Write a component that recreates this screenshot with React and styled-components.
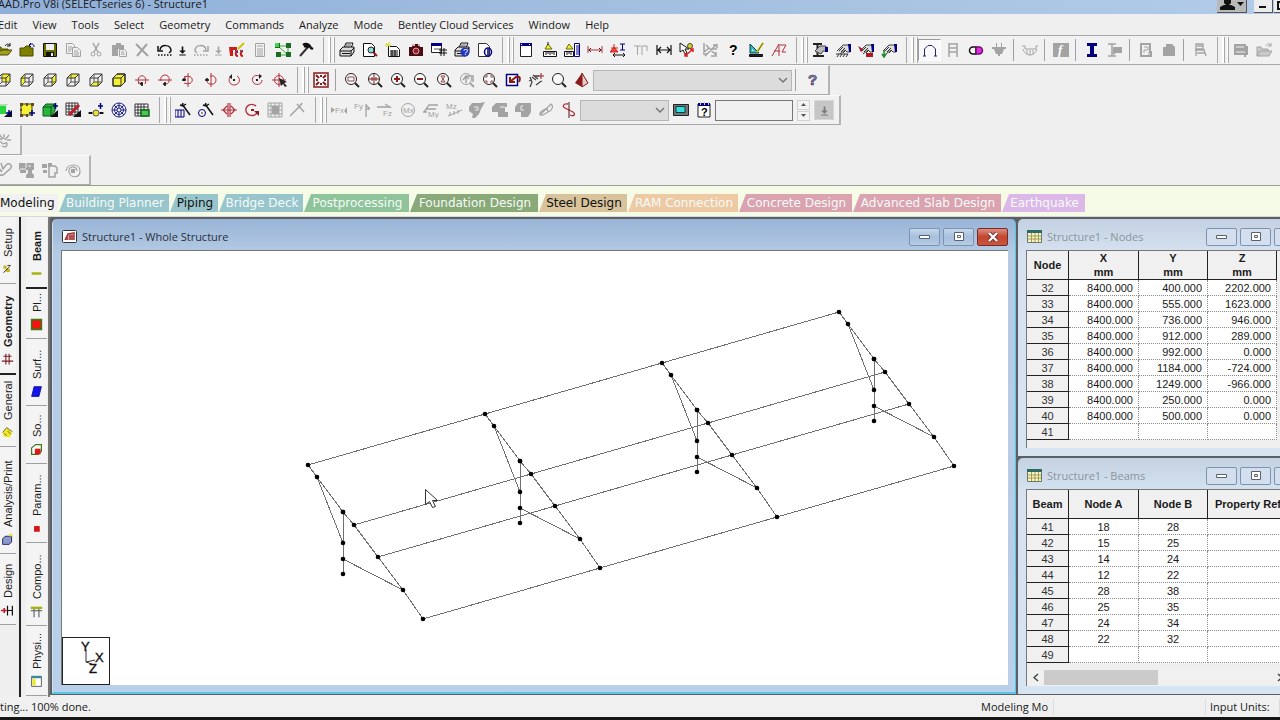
import React from 'react'
import styled, { createGlobalStyle, css } from 'styled-components';

const GlobalStyle = createGlobalStyle`
    * { box-sizing: border-box; }
    body {
        margin: 0;
        background: #efefef;
        font-family: 'Open Sans', 'Noto Sans', sans-serif;
        font-size: 12px;
        color: #1a1a1a;
    }
    button, input, select { font: inherit; color: inherit; }
`;

/* ---------- icons, all on a 16x16 grid ---------- */

const GREY = '#a3a3a3';
const RED = '#b5303a';
const NAVY = '#000080';

const P = ({ d, c = '#111', w = 1, f = 'none' }) => (
    <path d={d} stroke={c} strokeWidth={w} fill={f} />
)

const Cube = ({ face, solid }) => (
    <>
        {solid && <P d="M2 6l4-4h8v8l-4 4H2z" f="#f4f032" />}
        {face && <path d={face} fill="#f4f032" />}
        <P d="M2 6h8v8H2zM2 6l4-4h8v8l-4 4M10 6l4-4" c="#333" />
        {!solid && <P d="M6 2v8h8M6 10l-4 4" c="#555" />}
    </>
)

const Lens = ({ c = '#222', children }) => (
    <>
        <circle cx="7" cy="7" r="5.5" fill={c === GREY ? 'none' : '#fafafa'} stroke={c} />
        <P d="M11 11l4 4" c={c} w={2} />
        {children}
    </>
)

const Printer = () => (
    <>
        <P d="M5 6l2-5h7l-2 5" f="#fff" />
        <P d="M1 8l3-3h11v5l-3 4H1z" f="#ddd" />
        <P d="M1 9h11l3-3M3 11.500h8M12 9v5" />
        <P d="M7 3h5M6 5h5" c="#555" />
    </>
)

const Axle = ({ vertical, flip }) => (
    <g transform={vertical ? 'rotate(90 8 8)' : undefined}>
        <P d="M1 8h14" c={RED} />
        <P d={flip ? 'M4 9C2 1 14 1 12 9c0 2-2 3-3 3' : 'M5 12C1 1 15 1 11 12M4 11h4'} c={RED} />
        <P d="M8 10v4M6 12h3" w={1.500} />
    </g>
)

const Hand = () => (
    <>
        <P d="M2 9l6-6h5l2 1v6h-3l-2-2-5 4" c="#444" f="#ddd" />
        <P d="M4 9l4-4M6 10l4-4M8 11l3-3" c="#333" />
        <path d="M13 2h3v8h-2z" fill={NAVY} />
    </>
)

const Wand = () => <P d="M7 2l8 11M8 1l-1 3M11 2l-3 2M5 3l3 1" w={1.500} />

const Label = ({ x, y, size = 8, c = GREY, children }) => (
    <text x={x} y={y} fontSize={size} fill={c} fontFamily="Liberation Sans, sans-serif">{children}</text>
)

const icons = {
    open: <><P d="M1 13V5h4l1 2h6v2" c="#5b5b00" f="#808000" /><P d="M1 13l4-5h11l-4 5z" c="#4a4a00" f="#a0a020" /><P d="M9 4c2-3 4-2 5 0M14 1v3h-3" /></>,
    folder: <><P d="M1 14V6h4l2-2h4v2h3v8z" c="#4a4a00" f="#808000" /><P d="M11 3c2-2 4-1 4 2M12 1l-2 2 2 2" c={NAVY} /></>,
    save: <><P d="M1.500 1.500h13v13h-13z" f="#6b6b00" /><path d="M4 2h8v6H4z" fill="#eee" /><path d="M4 10h8v4H4z" fill="#111" /><path d="M9 11h2v3H9z" fill="#eee" /></>,
    copy: <><P d="M1.500 1.500h6l2 2v8h-8zM3 5h4M3 7h4M3 9h3" c={GREY} /><P d="M7.500 5.500h5l3 3v6h-8zM9 9h4M9 11h5M9 13h5" c={GREY} f="#efefef" /></>,
    cut: <><P d="M5 1l5 9M11 1l-5 9" c={GREY} w={1.500} /><circle cx="5" cy="12" r="2" stroke={GREY} fill="none" /><circle cx="11" cy="12" r="2" stroke={GREY} fill="none" /></>,
    paste: <><path d="M1 3h4V1h5v2h3v4H7v7H1z" fill={GREY} /><P d="M8.500 7.500h5l2 2v5h-7zM10 10h3M10 12h4" c={GREY} f="#efefef" /></>,
    del: <P d="M2 2l12 12M13 2L3 14" c={GREY} w={2} />,
    undo: <><P d="M3 8c1-6 11-6 11 1l-2 2" w={1.500} /><P d="M1 4v5h5" w={1.500} /><path d="M1 13h14" stroke="#111" strokeWidth="1.500" strokeDasharray="1.500 1.500" /></>,
    redo: <><P d="M13 8C12 2 2 2 2 9l2 2M15 4v5h-5" c={GREY} w={1.500} /><path d="M1 13h14" stroke={GREY} strokeWidth="1.500" strokeDasharray="1.500 1.500" /></>,
    staad: <><path d="M0 5h8v3H4v6H1z" fill="#c81e1e" /><P d="M15 1L9 7" c="#c8c800" w={2} /><P d="M9 9c-3 0-3 5 0 5M14 9c-3 0-3 5 0 5" c="#d01818" w={2} /><P d="M6 8l3 3M11 8l3 2" c="#3030a0" /></>,
    calc: <P d="M3.500 1.500h9v13h-9zM5 4h6M5 7h6M5 9h6M5 11h6M5 13h6" c={GREY} />,
    blocks: <><P d="M3 4h10M13 4v9M3 4l10 9M4 13h9" c="#39a339" /><path d="M0 1h5v5H0zM11 1h5v5h-5zM1 10h5v5H1zM11 10h5v5h-5z" fill="#1b6a24" /><path d="M0 1h4v4H0z" fill="#3bd84a" /></>,
    hammer: <><P d="M10 5L2 14" c="#333" w={2} /><P d="M5 3c3-2 6-1 8 3l2 1M6 4l5 1" c="#111" w={2.500} /></>,
    print: <Printer />,
    preview: <><P d="M1.500 1.500h8l3 3v10h-11z" f="#fff" /><circle cx="9" cy="8" r="3" fill="#8fd8dc" stroke="#222" /><P d="M11 10l4 4" c="#8b1a1a" w={2} /></>,
    report: <><P d="M3.500 4.500h8l3 3v7h-11z" f="#fff" /><P d="M5 9h8M5 11h8M5 13h8M7 8v6M10 8v6" /><P d="M1 1l4 4M5 0L1 5M0 3h6" c="#d8d820" /></>,
    camera: <><path d="M1 5h3l1-3h6l1 3h3v9H1z" fill="#4c0d12" /><circle cx="8" cy="9" r="3" fill="#a31f28" stroke="#fff" strokeWidth=".6" /><path d="M5 2h2v2H5zM10 2h2v2h-2z" fill="#e3b7bb" /></>,
    sheet: <><P d="M.5 1.500h10v9H.5z" f="#fff" c="#222" /><path d="M0 1h11v3H0z" fill={NAVY} /><P d="M3 7h6" c="#555" /><P d="M8 8h8M8 11h8M10 6v8M13 6v8" /></>,
    printHelp: <><Printer /><circle cx="11" cy="10" r="4.500" fill="#2136b8" /><Label x="9" y="13" size={9} c="#fff">?</Label></>,
    pageInfo: <><P d="M1.500 1.500h8l3 3v10h-11z" f="#fff" c="#333" /><ellipse cx="11" cy="10" rx="3.500" ry="4" fill="none" stroke={NAVY} strokeWidth="1.500" /><P d="M11 7v6" c={NAVY} w={1.500} /></>,
    win: <><P d="M2.500 1.500h11v13h-11z" f="#fff" c="#222" /><path d="M2 1h12v3H2z" fill={NAVY} /><path d="M3 2h1v1H3zM11 2h1v1h-1z" fill="#fff" /></>,
    ruler: <><P d="M7 2l4 5H4z" c="#6a6a00" f="#f4f032" /><path d="M7 0v3" stroke="#111" /><P d="M2.500 9.500h13v5h-13zM5 10v3M7 10v2M9 10v3M11 10v2M13 10v3" f="#fff" /></>,
    rulerPage: <><P d="M5 2l4 5H2z" c="#6a6a00" f="#f4f032" /><P d="M.5 9.500h9v5h-9zM3 10v3M5 10v2M7 10v3" f="#fff" /><P d="M10.500 1.500h5v13h-5zM12 4h3M12 6h3M12 8h3M12 10h3M12 12h3" c={NAVY} f="#fff" /></>,
    dims: <><P d="M1 4v7M1 8h14M15 4v7" c={RED} /><P d="M4 6L2 8l2 2M12 6l2 2-2 2" c="#5a1015" /></>,
    support: <><P d="M0 10l4-5 4 5zM4 5V2M1 6h7" c="#d42222" f="#f04040" /><P d="M10 2h5M10 8h5M12.500 2v6" c={NAVY} /><P d="M3 13h12M5 11l-2 2 2 2M13 11l2 2-2 2" /></>,
    tee: <P d="M1 4h7M4.500 4v9M9 13V4h5v5" c={GREY} />,
    width: <P d="M1 3v10M15 3v10M2 8h12M5 5L2 8l3 3M11 5l3 3-3 3" w={1.200} />,
    pick: <><P d="M1 1v9l3-2 2 4 2-1-2-4h4z" f="#fff" /><circle cx="11" cy="4" r="2.500" fill="#d8d820" stroke="#444" /><P d="M6 14l8-7M14 10V7h-3M6 11v3h3" c="#e02020" w={1.500} /></>,
    pickOff: <P d="M2 1v9l5-4M4 3l10 10M15 2L3 14M11 3h4v3M9 7h6M9 14h5v-4M1 12h5" c={GREY} w={1.500} />,
    ask: <text x="4" y="13" fontSize="14" fontWeight="700" fontFamily="Liberation Sans, sans-serif">?</text>,
    square: <><P d="M2 2v9h9z" c="#045" f="#38b8b8" /><path d="M4 7v2h2z" fill="#fff" /><P d="M15 1L9 10" c="#c8c800" w={2} /><P d="M15 1l-5 8" c="#333" w={.6} /><P d="M1.500 12.500h13v2h-13z" f="#222" /></>,
    az: <P d="M1 14L8 2v12M3 9h6M9 3h6l-4 7h4" c={RED} />,
    beamHand: <><P d="M1 2h9M5.500 2v11M1 14h11" c="#222" w={2} /><P d="M3 9l5-5h6v5h-3l-2 3z" c="#444" f="#bbb" /><path d="M13 5h3v5h-3z" fill={NAVY} /></>,
    deckHand: <><Hand /><P d="M1 12h12M2 15l2-3M5 15l2-3M8 15l2-3M11 15l2-3" c="#333" /></>,
    redHand: <><Hand /><path d="M0 4l5 3-2 3zM8 11h7v4H8z" fill="#b51624" /></>,
    greenHand: <><Hand /><P d="M3 8v6M1 12l2 3 2-3" c="#1c8a28" w={1.500} /></>,
    arch: <P d="M1 14h3M12 14h3M2.500 14V7L6 3.500h4L13.500 7v7" c="#26266a" />,
    ladder: <P d="M4 1v14M12 1v14M4 2h8M4 6h8M4 10h8" c={GREY} w={1.500} />,
    pill: <><P d="M8 5H5a3.500 3.500 0 000 7h3z" c="#111" w={1.500} f="#fff" /><P d="M8 5h3a3.500 3.500 0 010 7H8z" c="#701070" w={1.500} f="#e22ce2" /></>,
    basket: <path d="M1 5h14v2H1zM3 7h10l-2 5H9v2H7v-2H5zM5 1h1v4H5zM10 1h1v4h-1z" fill={GREY} />,
    moment: <P d="M0 4h3v3h11V4h2M1 7c2 8 12 8 14 0M5 8v4M8 8v5M11 8v4" c={GREY} />,
    func: <><path d="M0 1h16v14H0z" fill={GREY} /><text x="5" y="12" fontSize="13" fontStyle="italic" fontWeight="700" fill="#fff" fontFamily="Liberation Serif, serif">f</text></>,
    ibeam: <path d="M3 1h10v3h-3v8h3v3H3v-3h3V4H3z" fill={NAVY} />,
    ibeamOff: <><P d="M1 2h8M1 14h8M5 2v12" c={GREY} w={1.500} /><path d="M6 5h9v6H9l-3 2z" fill={GREY} /></>,
    pageOff: <><P d="M3 2h9v8h1v4H3z" c={GREY} w={2} /><P d="M6 5h4v3H6v3M11 10v4" c={GREY} /></>,
    block: <path d="M2 5h3V2h6l3 3v9H2z" fill={GREY} />,
    chair: <P d="M4 2h7v5H4zM3 8h10M4 8v6M12 8l2 6M5 11h8M5 4h6" c={GREY} w={1.300} />,
    disk: <><path d="M1 2h12v2h2v9h-2v2h-2v-2H1z" fill={GREY} /><P d="M3 5h8M3 10h9" c="#efefef" /></>,
    folderOff: <><P d="M1 14V5h4l1 2h6v2M1 14l3-5h12l-3 5z" c={GREY} f="#c9c9c9" /><P d="M10 4c2-3 3-3 5 0M15 1v3h-3" c={GREY} /></>,

    cubeBack: <Cube face="M6 2h8v8H6z" />,
    cubeLeft: <Cube face="M2 6l4-4v8l-4 4z" />,
    cubeRight: <Cube face="M10 6l4-4v8l-4 4z" />,
    cubeTop: <Cube face="M2 6l4-4h8l-4 4z" />,
    cubeBottom: <Cube face="M2 14l4-4h8l-4 4z" />,
    cubeSolid: <Cube solid />,
    rotUp: <Axle />,
    rotDown: <Axle flip />,
    rotLeft: <Axle vertical />,
    rotRight: <Axle vertical flip />,
    spinLeft: <><P d="M6 4c-5 2-3 9 2 9 6 0 7-7 3-9" c={RED} /><path d="M7 7h2v2H7zM6 2v5l-3-2z" fill="#222" /></>,
    spinRight: <><P d="M10 4C5 2 2 6 4 10s9 3 9-2" c={RED} /><path d="M7 7h2v2H7zM10 2v5l3-3z" fill="#222" /></>,
    target: <><circle cx="7" cy="8" r="4.500" fill="none" stroke={RED} /><P d="M0 8h14M7 1v14" c={RED} /><path d="M7 6l8 4-3 1 3 3-2 1-2-3-2 2z" fill="#222" /></>,
    fit: <><P d="M1 1h14v14H1z" c="#8b1a1a" w={1.500} f="#fff" /><P d="M3 3l3 3M13 3l-3 3M3 13l3-3M13 13l-3-3" c="#8b1a1a" w={2} /><path d="M3 7h2v2H3zM11 7h2v2h-2zM7 3h2v2H7zM7 11h2v2H7z" fill="#8b1a1a" /></>,
    zoomWin: <Lens><P d="M4 5h6v4H4z" c="#8b4a4a" /></Lens>,
    zoomAll: <Lens><P d="M2 7h10M7 2v10M5 5v4M9 5v4" c="#8b1a1a" /></Lens>,
    zoomIn: <Lens><P d="M4 7h6M7 4v6" c="#8b1a1a" w={2} /></Lens>,
    zoomOut: <Lens><P d="M4 7h6" c="#8b1a1a" w={2} /></Lens>,
    zoomBeam: <Lens><P d="M5 4h4M5 10h4M5 4l4 6M9 4l-4 6" c="#a04040" /></Lens>,
    zoomOff: <Lens c={GREY}><P d="M7 11V5M4 8l3-4 3 3M8 4h6v6" c={GREY} w={1.500} /></Lens>,
    zoomExt: <Lens><P d="M4 6V4h2M8 4h2v2M4 8v2h2M10 8v2H8" c="#a04040" /></Lens>,
    zoomBack: <><P d="M1.500 2.500h11v11h-11z" c={NAVY} w={1.500} f="#fff" /><P d="M14 10c2-5 0-6-3-5L6 9M5 5v5h5" c="#8b1a1a" w={2} /></>,
    pan: <><P d="M2 15l2-5-2-5M4 5l4 3M5 3l5 4M1 9l3-1M8 13l4-3 2-1M6 4h5" c="#444" w={1.300} /><P d="M13 1v6M10 4h6" c="#8b1a1a" /></>,
    lens: <Lens />,
    pyramid: <><path d="M8 1L1 11l7 4z" fill="#8b1a1a" /><P d="M8 1l6 10-6 4z" c="#8b1a1a" f="#e9c9c9" /></>,
    helpBlue: <text x="4" y="13" fontSize="15" fontWeight="700" fill="#5f9fd0" stroke="#5b1f4f" strokeWidth=".7" fontFamily="Liberation Sans, sans-serif">?</text>,

    greenSnap: <><path d="M1 4h9v8H1z" fill="#28d53c" /><path d="M1 4l2-2h9l-2 2z" fill="#a4e4a8" /><path d="M8 15h8V8z" fill="#111" /><P d="M10 11h6M13 8v6" c={NAVY} w={1.500} /></>,
    yellowSnap: <><P d="M2 2h11v11H2z" c="#333" f="#f4f032" /><path d="M1 1h3v3H1zM7 1h2v3H7zM12 1h3v3h-3zM1 7h2v2H1zM1 12h3v3H1zM7 12h2v3H7z" fill="#6a4a10" /><P d="M10 11h6M13 8v6" c={NAVY} w={1.500} /></>,
    greenCube: <><P d="M1 5l3-3h9v7l-4 5H1z" c="#115518" f="#28b53c" /><P d="M1 5h8v9M9 5l4-3" c="#115518" /><path d="M8 15h8V8z" fill="#111" /><P d="M11 4h5M13.500 1v6" c={NAVY} w={1.500} /></>,
    gridCut: <><P d="M1 1h12v12H1zM4 1v12M7 1v12M10 1v12M1 4h12M1 7h12M1 10h12" c="#333" f="#fff" /><P d="M14 3L4 13" c="#c01c2c" w={3} /><path d="M8 15h8V8z" fill="#111" /></>,
    nodePlus: <><P d="M0 11h16" c="#333" /><circle cx="8" cy="11" r="3" fill="#f4e032" stroke="#555" /><path d="M1 10h3v2H1zM12 10h3v2h-3z" fill="#111" /><P d="M10 4h5M12.500 1v6" c={NAVY} w={1.500} /></>,
    wheel: <><circle cx="8" cy="8" r="7" fill="none" stroke="#22228a" /><circle cx="8" cy="8" r="4.500" fill="none" stroke="#22228a" /><circle cx="8" cy="8" r="2" fill="#efefef" stroke="#22228a" /><P d="M8 1v5M8 10v5M1 8h5M10 8h5M3 3l4 4M9 9l4 4M13 3L9 7M7 9l-4 4" c="#22228a" /></>,
    gridGreen: <><P d="M1 2h13v12H1zM4 2v12M7 2v12M10 2v12M1 5h13M1 8h13M1 11h13" c="#333" f="#fff" /><P d="M7 8h8v6H7z" c="#0c6a1a" w={1.500} f="#4cc45a" /></>,
    wandFence: <><Wand /><P d="M0 8h9v7H0zM3 8v7M6 8v7" c={NAVY} /></>,
    wandDot: <><Wand /><circle cx="4" cy="11" r="3.500" fill="none" stroke={NAVY} /><circle cx="4" cy="11" r="1" fill="#a07020" /></>,
    mirror: <P d="M0 8h16M7 1v14M9 1v14M6 4L2 8l4 4M10 4l4 4-4 4" c={RED} w={1.200} />,
    turn: <><P d="M12 4C7 0 1 4 2 9s8 6 11 2" c={RED} w={1.300} /><path d="M10 9h5v5z" fill="#8b1a1a" /><path d="M7 7h3v2H7z" fill="#8b1a1a" /></>,
    gridOff: <><P d="M1 1h14v14H1zM4 1v14M12 1v14M1 4h14M1 12h14M8 1v14M1 8h14" c={GREY} /><path d="M5 4h7v8H5z" fill={GREY} /></>,
    splitOff: <P d="M0 14L9 5M7 2l7 8M10 4l2-3" c={GREY} w={1.500} />,

    fx: <><path d="M0 5l4 3-4 3zM16 5v7l-3-3z" fill={GREY} /><Label x="4" y="11">Fx</Label></>,
    fy: <><Label x="0" y="7">Fy</Label><P d="M12 15V2M12 3l4 4h-4" c={GREY} w={1.300} /></>,
    fz: <><P d="M0 5h12M8 2l5 3H8" c={GREY} w={1.300} /><Label x="6" y="14">Fz</Label></>,
    mx: <><circle cx="8" cy="8" r="6.500" fill="none" stroke={GREY} /><Label x="3" y="11">Mx</Label></>,
    my: <><P d="M1 10L6 3h9M3 7h10M0 10h4" c={GREY} w={1.300} /><Label x="5" y="15">My</Label></>,
    mz: <><Label x="0" y="7">Mz</Label><P d="M2 14l14-6M4 10v4M8 9v4M12 8v4" c={GREY} /></>,
    tag: <><path d="M0 5l3-4h8l5-1-4 7-2 5-4 4H3l1-4-4-3z" fill={GREY} /><P d="M5 5h4v3H6" c="#efefef" /></>,
    page1: <><path d="M0 5l4-4h11v4h-2v5h3v5H6v-5H0z" fill={GREY} /><P d="M8 5h5" c="#efefef" /></>,
    page2: <><path d="M0 5l3-4h13v9l-3 5H6v-5H0z" fill={GREY} /><P d="M8 4H6v4h3" c="#efefef" /></>,
    leaf: <P d="M2 13L13 2c3 2 1 7-3 8l-5 3c-4 1-4-2-1-4l5-3 1 4" c={GREY} w={1.200} />,
    curve: <><P d="M7 2C2 1 1 5 4 6l8 4c3 2 1 5-3 3" c={RED} w={1.300} /><P d="M8 0v16" c="#5a1015" /></>,
    screen: <><P d="M.5 2.500h15v11H.5z" c="#222" f="#777" /><P d="M3 4.500h9v6H3z" c="#044" f="#37e0dc" /></>,
    helpWin: <><P d="M2 2h12v13H2z" f="#fff" c="#222" /><path d="M2 1h12v3H2z" fill={NAVY} /><path d="M4 0h1v3H4zM8 0h1v3H8zM12 0h1v3h-1z" fill="#ccc" /><text x="5" y="14" fontSize="11" fontWeight="700" fontFamily="Liberation Sans, sans-serif">?</text></>,

    gearOff: <P d="M4 14c-4-3 0-6 2-3s5-3 5 1-3 3-5 2M2 5l4 3M8 2v5M13 3l-4 5M11 8h4M3 2l4 5" c={GREY} w={1.300} />,
    loopOff: <P d="M2 5l4 5M5 1l2 6 3-4c4-3 7 1 4 4l-7 6c-3 1-6-2-3-4" c={GREY} w={1.500} />,
    colOff: <><path d="M0 1h15v7h-2v3l2 2v3H7v-3l2-2V8H7v3H1V8H0z" fill={GREY} /><P d="M9 4h3M1 7h6M7 1v5" c="#efefef" /></>,
    copyOff: <><path d="M0 2h5v4H0zM1 8h4v3H1zM6 1h4v4H6z" fill={GREY} /><P d="M7 4h6l2 2v5h-2v4H7z" c={GREY} w={1.500} f="#efefef" /></>,
    swirl: <><path d="M6 7h4v4H6z" fill={GREY} /><P d="M1 9C2 1 15 1 15 9s-10 7-11 1 7-7 8-1" c={GREY} w={1.200} /></>,

    setup: <><path d="M3 3h4v4H3zM6 7h5v4H6z" fill="#c8b820" /><P d="M3 12l8-8M8 3h4" /></>,
    geometry: <P d="M3 4h10M1 10h14M6 1v13M10 1v13" c="#7a1a22" w={1.300} />,
    general: <><path d="M2 8l5-6 7 5-3 7-8-1z" fill="#f0e828" /><P d="M2 8l5-6 7 5M4 9l3 3M8 6l4 4" c="#555510" /></>,
    analysis: <><P d="M2 7l3-3h8v7l-3 3H2z" f="#8c98d0" c="#101040" /><path d="M10 1h4v3h-4z" fill="#e8e040" /></>,
    design: <><P d="M0 8h7M4 5v6" c="#c01c2c" w={2} /><P d="M8 2v12M14 2v12M8 8h6" w={1.500} /></>,
    beam: <P d="M2 8h12" c="#a8b010" w={3} />,
    plate: <P d="M2 2h12v12H2z" c="#3a7a1a" w={2} f="#fb1010" />,
    surface: <P d="M5 2h9l-3 12H2z" c="#0a0a88" f="#1414ee" />,
    solid: <><P d="M2 6l5-4h7v8l-4 4H2z" c="#3a7a1a" f="#fff" w={1.500} /><path d="M6 7h7v7H6z" fill="#e01818" /></>,
    param: <path d="M5 5h7v7H5z" fill="#d81414" />,
    compo: <><path d="M1 2h14v3H1z" fill="#a8b010" /><P d="M5 5v10M11 5v10M1 7h14" c="#556" w={1.300} /></>,
    physi: <><P d="M2 2h12v12H2z" c="#345" f="#fff" /><path d="M2 1h12v3H2z" fill="#3a8a9a" /><path d="M3 5h4v8H3z" fill="#f0e828" /></>,
};

const Svg = styled.svg`
    display: block;
    flex: none;
    width: ${p => p.$size || 16}px;
    height: ${p => p.$size || 16}px;
`;

const Icon = ({ name, size }) => (
    <Svg viewBox="0 0 16 16" $size={size} aria-hidden="true">{icons[name]}</Svg>
)

/* ---------- layout ---------- */

const Page = styled.div`
    display: flex;
    flex-direction: column;
    min-height: 100vh;
    overflow: hidden;
`;

const TitleBar = styled.header`
    display: flex;
    align-items: flex-end;
    height: 14px;
    overflow: hidden;
    white-space: nowrap;
    background: linear-gradient(90deg, #8fafd9, #a3bfdf 50%, #b1cbe9);
`;

const AppTitle = styled.h1`
    flex: 1;
    margin: 0 0 2px -2px;
    font-size: 11px;
    font-weight: 400;
    line-height: 16px;
`;

const CaptionButton = styled.button`
    display: flex;
    align-items: flex-end;
    justify-content: center;
    flex: none;
    width: ${p => p.$wide ? 30 : 19}px;
    height: 13px;
    margin: 0 ${p => p.$wide ? 7 : 1}px 1px 0;
    padding: 0 0 2px;
    overflow: hidden;
    background: ${p => p.$wide ? '#b9b9b9' : '#ececec'};
    border: solid #555;
    border-width: 0 1px 1px 0;
`;

const CaptionButtons = styled.div`
    display: flex;
    width: 63px;
    overflow: hidden;
`;

const MenuBar = styled.nav`
    display: flex;
    align-items: center;
    gap: 15px;
    height: 21px;
    margin-left: -2px;
    white-space: nowrap;
    overflow: hidden;
`;

const MenuItem = styled.button`
    padding: 0;
    background: none;
    border: 0;
    font-size: 11px;
    line-height: 18px;
`;

const ToolRow = styled.div`
    display: flex;
    height: 30px;
    overflow: hidden;
    ${p => p.$full && css`
        background: #f1f1f1;
        border-top: 1px solid #a9a9a9;
        border-bottom: 1px solid #a9a9a9;
    `}
`;

const Strip = styled.div`
    display: flex;
    flex: none;
    align-items: center;
    padding-right: 5px;
    background: #f1f1f1;
    ${p => p.$boxed && css`
        border-bottom: 1px solid #a9a9a9;
        border-right: 2px solid #b4b4b4;
        border-top: 1px solid #fbfbfb;
    `}
`;

const ToolButton = styled.button`
    display: flex;
    flex: none;
    align-items: center;
    justify-content: center;
    width: 23px;
    height: 22px;
    padding: 0;
    background: ${p => p.$on ? '#f9f9fc' : 'none'};
    border: 1px solid transparent;
    ${p => p.$on && css`border-color: #9c9c9c #fff #fff #9c9c9c;`}
    ${p => p.$first && css`margin-left: -8px;`}
`;

const DropButton = styled(ToolButton)`
    width: 13px;
`;

const Divider = styled.span`
    flex: none;
    width: 1px;
    height: 22px;
    margin: 0 4px 0 3px;
    background: #a0a0a0;
`;

const Grip = styled.span`
    display: flex;
    flex: none;
    align-self: stretch;
    gap: 2px;
    width: 18px;
    padding: 1px 0 1px 6px;
    &::before, &::after {
        content: '';
        background: #fff;
        border-right: 1px solid #a8a8a8;
    }
    &::before {
        width: 8px;
        border-left: 1px solid #a8a8a8;
        background: linear-gradient(90deg, transparent 4px, #fff 4px);
    }
    &::after { width: 2px; }
`;

const ComboBox = styled.span`
    display: grid;
    flex: none;
    align-items: center;
    width: ${p => p.$w}px;
    height: 21px;
    background: #dcdcdc;
    border: 1px solid #b6b6b6;
    & > * { grid-area: 1 / 1; }
    & > svg { justify-self: end; margin-right: 3px; width: 10px; height: 10px; }
`;

const Select = styled.select`
    width: 100%;
    height: 100%;
    appearance: none;
    background: none;
    border: 0;
`;

const NumberInput = styled.input`
    width: 78px;
    height: 21px;
    margin: 0 4px 0 0;
    background: #f0f0f0;
    border: 1px solid #777;
`;

const Spinner = styled.span`
    display: flex;
    flex-direction: column;
    gap: 1px;
    margin-right: 4px;
`;

const SpinButton = styled.button`
    display: flex;
    align-items: center;
    justify-content: center;
    width: 13px;
    height: 10px;
    padding: 0;
    background: #f3f3f3;
    border: 1px solid #d2d2d2;
`;

const LoadButton = styled.button`
    display: flex;
    align-items: center;
    justify-content: center;
    width: 20px;
    height: 20px;
    padding: 0;
    background: #c6c6c6;
    border: 1px solid #d6d6d6;
`;

const ModuleBar = styled.nav`
    display: flex;
    align-items: flex-end;
    gap: 1px;
    height: 31px;
    padding-bottom: 4px;
    background: #f5fbe6;
    border-top: 1px solid #9a9a9a;
    overflow: hidden;
`;

const ModuleTab = styled.button`
    flex: none;
    width: ${p => p.$w}px;
    height: 18px;
    padding: 0 3px 0 5px;
    background: ${p => p.$bg};
    color: ${p => p.$dark ? '#111' : '#f4fbf8'};
    border: 0;
    clip-path: polygon(7px 0, 100% 0, 100% 100%, 0 100%);
    font-family: 'DejaVu Sans', sans-serif;
    font-size: 12px;
    line-height: 18px;
    text-align: center;
    white-space: nowrap;
    ${p => p.$flat && css`
        padding: 0;
        clip-path: none;
        text-align: left;
    `}
`;

const Workspace = styled.main`
    display: flex;
    flex: 1;
    min-height: 0;
    border-top: 1px solid #d8d8d8;
`;

const PageTabs = styled.nav`
    display: flex;
    flex: none;
    flex-direction: column;
    width: ${p => p.$w}px;
    border-right: 2px solid #222;
    ${p => p.$inner && css`
        margin-left: 5px;
        border-right: 2px solid #777;
    `}
`;

const PageTab = styled.button`
    display: flex;
    align-items: center;
    flex: none;
    gap: 6px;
    width: ${p => p.$narrow ? 16 : 21}px;
    height: ${p => p.$h}px;
    padding: 7px 0 0;
    writing-mode: vertical-rl;
    transform: rotate(180deg);
    background: #f4f4f4;
    border: 0;
    border-top: ${p => p.$on ? 2 : 1}px solid ${p => p.$on ? '#222' : '#a0a0a0'};
    font-family: 'Liberation Sans', Arial, sans-serif;
    font-size: 11px;
    line-height: 14px;
    font-weight: ${p => p.$on ? 700 : 400};
    white-space: nowrap;
    & > svg { transform: rotate(180deg); }
`;

const Desktop = styled.div`
    display: flex;
    flex: 1;
    min-width: 0;
    padding: 2px 0 1px 2px;
    gap: 2px;
    background: #5c6063;
    border-bottom: 2px solid #f0f0f0;
`;

const SideColumn = styled.div`
    display: flex;
    flex-direction: column;
    flex: none;
    gap: 2px;
    width: 262px;
    overflow: hidden;
`;

const Window = styled.section`
    display: flex;
    flex-direction: column;
    flex: ${p => p.$grow ? '1' : 'none'};
    min-width: 0;
    width: ${p => p.$w ? p.$w + 'px' : 'auto'};
    padding: 0 8px 8px;
    border-radius: 5px 5px 0 0;
    background: linear-gradient(180deg, #c3d1e2 0, #d6e2f0 34px, #d7e4f2 100%);
    ${p => p.$active && css`
        padding: 0 7px 7px 8px;
        background: linear-gradient(180deg, #98b4d7 0, #b5cae3 34px, #b9d0ea 100%);
        border-right: 1px solid #57c6e8;
        border-bottom: 2px solid #57c6e8;
        border-left: 1px solid #cfe0f2;
    `}
`;

const WindowTitle = styled.header`
    display: flex;
    align-items: center;
    flex: none;
    gap: 3px;
    height: 31px;
    padding: 4px 0 0 1px;
    color: ${p => p.$active ? '#26303c' : '#8b949e'};
`;

const WindowName = styled.h2`
    flex: 1;
    margin: 0 0 0 2px;
    font-size: 11px;
    font-weight: 400;
    line-height: 16px;
    white-space: nowrap;
`;

const WindowButton = styled.button`
    display: flex;
    align-items: center;
    justify-content: center;
    width: 31px;
    height: 18px;
    padding: 0;
    border: 1px solid ${p => p.$close ? '#7c2a26' : '#7d93b0'};
    border-radius: 2px;
    background: ${p => p.$close
        ? 'linear-gradient(180deg, #dd8d7f, #c3452f 50%, #c8573f)'
        : p.$active ? 'linear-gradient(180deg, #c5d7ec, #a6bfdd 50%, #b6cce6)' : '#d3dfee'};
`;

const Client = styled.div`
    position: relative;
    display: flex;
    flex-direction: column;
    flex: 1;
    min-height: 0;
    padding-bottom: ${p => p.$pad || 0}px;
    background: ${p => p.$grey ? '#efefef' : '#fff'};
    border: solid #777;
    border-width: 1px 0 0 1px;
    overflow: hidden;
`;

const Canvas = styled.svg`
    display: block;
    flex: 1;
    width: 100%;
    min-height: 0;
`;

const AxisBox = styled.svg`
    position: absolute;
    left: 0;
    bottom: 0;
    width: 48px;
    height: 48px;
    background: #fff;
    border: 1px solid #222;
`;

const Grid = styled.table`
    flex: none;
    width: ${p => p.$w}px;
    table-layout: fixed;
    border-collapse: separate;
    border-spacing: 0;
    font-family: 'Liberation Sans', Arial, sans-serif;
    font-size: 11px;
    line-height: 14px;
`;

const Head = styled.th`
    width: ${p => p.$w}px;
    height: 29px;
    padding: 0;
    background: #f0f0f0;
    border: solid #222;
    border-width: 0 1px 1px 0;
    font-weight: 700;
    line-height: 14px;
    white-space: nowrap;
`;

const RowHead = styled.th`
    height: 16px;
    padding: 0;
    background: #f0f0f0;
    border: solid #222;
    border-width: 0 1px 1px 0;
    color: #333;
    font-weight: 400;
`;

const Cell = styled.td`
    height: 16px;
    padding: 0 ${p => p.$center ? 0 : 5}px 0 0;
    background: #fff;
    border: dotted #8c8c8c;
    border-width: 0 1px 1px 0;
    text-align: ${p => p.$center ? 'center' : 'right'};
`;

const ScrollBar = styled.div`
    display: flex;
    align-items: center;
    height: 17px;
    margin-top: auto;
    background: #f0f0f0;
`;

const ScrollButton = styled.button`
    display: flex;
    align-items: center;
    justify-content: center;
    width: 17px;
    height: 17px;
    padding: 0;
    background: none;
    border: 0;
`;

const ScrollThumb = styled.div`
    width: 114px;
    height: 15px;
    margin-right: 113px;
    background: #cbcbcb;
`;

const StatusBar = styled.footer`
    display: flex;
    flex: none;
    align-items: center;
    height: 23px;
    background: #f0f0f0;
    border-bottom: 3px solid #161616;
    line-height: 16px;
    font-size: 11px;
    white-space: nowrap;
`;

const StatusCell = styled.span`
    flex: ${p => p.$w ? 'none' : '1'};
    width: ${p => p.$w ? p.$w + 'px' : 'auto'};
    height: 16px;
    padding-left: ${p => p.$pad || 0}px;
    border-right: 1px solid ${p => p.$w ? '#dcdcdc' : 'transparent'};
    overflow: hidden;
`;

/* ---------- data ---------- */

const menus = ['Edit', 'View', 'Tools', 'Select', 'Geometry', 'Commands', 'Analyze', 'Mode', 'Bentley Cloud Services', 'Window', 'Help'];

// "|" is a divider, "::" starts the next toolbar, "v" and "w" are drop arrows (on / off)
const row1 = 'open folder save copy cut paste del undo v redo w staad calc blocks hammer :: print preview report camera sheet printHelp pageInfo :: win ruler rulerPage dims support tee width pick pickOff ask square az :: beamHand deckHand redHand greenHand :: arch ladder pill basket | moment | func | ibeam ibeamOff | pageOff block | chair :: disk folderOff'.split(' ');
const row2 = 'cubeBack cubeLeft cubeRight cubeTop cubeBottom cubeSolid rotUp rotDown rotLeft rotRight spinLeft spinRight target :: fit | zoomWin zoomAll zoomIn zoomOut zoomBeam zoomOff zoomExt zoomBack pan lens pyramid'.split(' ');
const row3 = 'greenSnap yellowSnap greenCube gridCut nodePlus wheel gridGreen :: wandFence wandDot mirror turn gridOff splitOff :: fx fy fz mx my mz tag page1 page2 leaf curve'.split(' ');

const modules = [
    { name: 'Modeling', w: 58, bg: '#f1f1f1', dark: true, flat: true },
    { name: 'Building Planner', w: 110, bg: '#98c5cc' },
    { name: 'Piping', w: 48, bg: '#98c5cc', dark: true },
    { name: 'Bridge Deck', w: 84, bg: '#98c5cc' },
    { name: 'Postprocessing', w: 105, bg: '#8fc49a' },
    { name: 'Foundation Design', w: 128, bg: '#8aa978' },
    { name: 'Steel Design', w: 88, bg: '#d8c39c', dark: true },
    { name: 'RAM Connection', w: 110, bg: '#eecaa4' },
    { name: 'Concrete Design', w: 113, bg: '#dba3b0' },
    { name: 'Advanced Slab Design', w: 148, bg: '#dba3b0' },
    { name: 'Earthquake', w: 83, bg: '#dcb8e8' },
];

const outerTabs = [
    { name: 'Setup', icon: 'setup', h: 67 },
    { name: 'Geometry', icon: 'geometry', h: 91, on: true },
    { name: 'General', icon: 'general', h: 72 },
    { name: 'Analysis/Print', icon: 'analysis', h: 107 },
    { name: 'Design', icon: 'design', h: 71 },
];

const innerTabs = [
    { name: 'Beam', icon: 'beam', h: 72, on: true },
    { name: 'Pl...', icon: 'plate', h: 50 },
    { name: 'Surf...', icon: 'surface', h: 67 },
    { name: 'So...', icon: 'solid', h: 58 },
    { name: 'Param...', icon: 'param', h: 79 },
    { name: 'Compo...', icon: 'compo', h: 83 },
    { name: 'Physi...', icon: 'physi', h: 70 },
];

const nodes = [
    [32, '8400.000', '400.000', '2202.000'],
    [33, '8400.000', '555.000', '1623.000'],
    [34, '8400.000', '736.000', '946.000'],
    [35, '8400.000', '912.000', '289.000'],
    [36, '8400.000', '992.000', '0.000'],
    [37, '8400.000', '1184.000', '-724.000'],
    [38, '8400.000', '1249.000', '-966.000'],
    [39, '8400.000', '250.000', '0.000'],
    [40, '8400.000', '500.000', '0.000'],
    [41, '', '', ''],
];

const beams = [
    [41, 18, 28], [42, 15, 25], [43, 14, 24], [44, 12, 22], [45, 28, 38],
    [46, 25, 35], [47, 24, 34], [48, 22, 32], [49, '', ''],
];

// one portal frame, the other three are the same frame moved along
const rafter = [[246, 214], [255, 226], [281, 261], [292, 274], [316, 306], [341, 339], [361, 368]];
const post = [[281, 261], [281, 292], [281, 308], [281, 323]];
const purlins = [0, 3, 4, 6];
const frames = [0, 1, 2, 3];
const STEP = [177, -51];

/* ---------- parts ---------- */

const DownArrow = ({ c }) => (
    <Svg viewBox="0 0 10 16" $size={13} aria-hidden="true">
        <path d="M4 3h2v5h3l-4 4-4-4h3zM1 13h8v1H1z" fill={c} />
    </Svg>
)

const Chevron = () => (
    <svg viewBox="0 0 10 10" aria-hidden="true"><path d="M1 3l4 4 4-4" stroke="#777" strokeWidth="1.500" fill="none" /></svg>
)

const tools = (row, inset) => row.map((t, i) => {
    if (t === '|') return <Divider key={i} />
    if (t === '::') return <Grip key={i} />
    if (t === 'v' || t === 'w') {
        return <DropButton key={i} aria-label="more"><DownArrow c={t === 'v' ? '#111' : GREY} /></DropButton>
    }
    return (
        <ToolButton key={i} aria-label={t} $first={i === 0 && !inset} $on={t === 'arch'}>
            <Icon name={t} />
        </ToolButton>
    )
})

const WindowButtons = ({ active }) => (
    <>
        <WindowButton $active={active} aria-label="Minimize">
            <svg width="12" height="6" viewBox="0 0 12 6"><path d="M.5 1.500h10v3H.5z" fill="#fff" stroke="#5a6270" /></svg>
        </WindowButton>
        <WindowButton $active={active} aria-label="Maximize">
            <svg width="12" height="10" viewBox="0 0 12 10"><path d="M1.500.5h9v8h-9z" fill="#fff" stroke="#5a6270" /><path d="M4.500 3.500h3v2h-3z" fill="none" stroke="#5a6270" /></svg>
        </WindowButton>
        <WindowButton $close={active} aria-label="Close">
            <svg width="12" height="10" viewBox="0 0 12 10"><path d="M2 1l8 8M10 1L2 9" stroke="#6b2a26" strokeWidth="4" /><path d="M2 1l8 8M10 1L2 9" stroke="#fff" strokeWidth="2.400" /></svg>
        </WindowButton>
    </>
)

const TableIcon = () => (
    <svg width="15" height="13" viewBox="0 0 15 13" aria-hidden="true">
        <path d="M.5.5h14v12H.5z" fill="#fbf6c0" stroke="#6a7a60" />
        <path d="M0 0h15v3H0z" fill="#2b6a66" />
        <path d="M1 6h13M1 9h13M4.500 3v9M8 3v9M11.500 3v9" stroke="#a09a60" />
    </svg>
)

const points = (list) => list.map(p => p.join(',')).join(' ')

const Structure = () => (
    <Canvas viewBox="0 0 946 434" preserveAspectRatio="xMinYMin meet" role="img" aria-label="Whole Structure">
        <g fill="none" stroke="#707070" strokeWidth="1" shapeRendering="crispEdges">
            {purlins.map(i => (
                <line key={i}
                    x1={rafter[i][0]} y1={rafter[i][1]}
                    x2={rafter[i][0] + STEP[0] * 3} y2={rafter[i][1] + STEP[1] * 3}
                />
            ))}
            {frames.map(n => (
                <g key={n} transform={`translate(${STEP[0] * n} ${STEP[1] * n})`}>
                    <polyline points={points(rafter)} />
                    <polyline points={points(post)} />
                    <polyline points={points([rafter[1], post[1]])} />
                    <polyline points={points([post[2], rafter[5]])} />
                </g>
            ))}
        </g>
        {frames.map(n => (
            <g key={n} transform={`translate(${STEP[0] * n} ${STEP[1] * n})`}>
                {[...rafter, ...post].map(([x, y], i) => <circle key={i} cx={x} cy={y} r="2.300" fill="#000" />)}
            </g>
        ))}
        <path d="M363.500 238.500v15l4-3 3 6 3-1-3-6h5z" fill="#fff" stroke="#333" />
    </Canvas>
)

export default function App() {
    return (
        <Page>
            <GlobalStyle />
            <TitleBar>
                <AppTitle>AAD.Pro V8i (SELECTseries 6) - Structure1</AppTitle>
                <CaptionButtons>
                    <CaptionButton $wide aria-label="Account">
                        <svg width="26" height="11" viewBox="0 0 26 11"><path d="M1 11V8l4-2h2L5 4V0h7v4l-2 2h2l4 2v3z" fill="#111" /><path d="M18 3h7l-3.500 4z" fill="#111" /></svg>
                    </CaptionButton>
                    <CaptionButton aria-label="Minimize">
                        <svg width="8" height="4" viewBox="0 0 8 4"><path d="M0 0h7v2H0z" fill="#111" /></svg>
                    </CaptionButton>
                    <CaptionButton aria-label="Maximize">
                        <svg width="12" height="9" viewBox="0 0 12 9"><path d="M1 1h10v7H1z" fill="none" stroke="#111" strokeWidth="2" /></svg>
                    </CaptionButton>
                </CaptionButtons>
            </TitleBar>
            <MenuBar>
                {menus.map(m => <MenuItem key={m}>{m}</MenuItem>)}
            </MenuBar>

            <ToolRow $full>
                <Strip>{tools(row1)}</Strip>
            </ToolRow>
            <ToolRow>
                <Strip $boxed>
                    {tools(row2)}
                    <ComboBox $w={199}>
                        <Select disabled aria-label="View"><option></option></Select>
                        <Chevron />
                    </ComboBox>
                    <Divider />
                    <ToolButton aria-label="Help"><Icon name="helpBlue" /></ToolButton>
                </Strip>
            </ToolRow>
            <ToolRow>
                <Strip $boxed>
                    {tools(row3)}
                    <ComboBox $w={89}>
                        <Select disabled aria-label="Load case"><option></option></Select>
                        <Chevron />
                    </ComboBox>
                    {tools(['screen', 'helpWin'], true)}
                    <NumberInput aria-label="Scale" />
                    <Spinner>
                        <SpinButton aria-label="Up"><svg width="5" height="3" viewBox="0 0 5 3"><path d="M0 3l2.500-3L5 3z" fill="#555" /></svg></SpinButton>
                        <SpinButton aria-label="Down"><svg width="5" height="3" viewBox="0 0 5 3"><path d="M0 0l2.500 3L5 0z" fill="#555" /></svg></SpinButton>
                    </Spinner>
                    <LoadButton aria-label="Apply"><DownArrow c="#777" /></LoadButton>
                </Strip>
            </ToolRow>
            <ToolRow>
                <Strip $boxed>{tools(['gearOff'])}</Strip>
            </ToolRow>
            <ToolRow>
                <Strip $boxed>{tools(['loopOff', 'colOff', 'copyOff', 'swirl'])}</Strip>
            </ToolRow>

            <ModuleBar>
                {modules.map(m => (
                    <ModuleTab key={m.name} $w={m.w} $bg={m.bg} $dark={m.dark} $flat={m.flat}>{m.name}</ModuleTab>
                ))}
            </ModuleBar>

            <Workspace>
                <PageTabs $w={21}>
                    {outerTabs.map(t => (
                        <PageTab key={t.name} $h={t.h} $on={t.on} $narrow>
                            <Icon name={t.icon} size={13} />{t.name}
                        </PageTab>
                    ))}
                </PageTabs>
                <PageTabs $w={24} $inner>
                    {innerTabs.map(t => (
                        <PageTab key={t.name} $h={t.h} $on={t.on}>
                            <Icon name={t.icon} size={13} />{t.name}
                        </PageTab>
                    ))}
                </PageTabs>

                <Desktop>
                    <Window $active $grow>
                        <WindowTitle $active>
                            <svg width="15" height="13" viewBox="0 0 15 13" aria-hidden="true">
                                <rect x=".5" y=".5" width="14" height="12" rx="1" fill="#fff" stroke="#333" />
                                <path d="M3 10l3-6 6-1v7M5 10V6M8 10V5M10 10V5" stroke="#a33a3a" strokeWidth="1.500" fill="#d99a9a" />
                            </svg>
                            <WindowName>Structure1 - Whole Structure</WindowName>
                            <WindowButtons active />
                        </WindowTitle>
                        <Client>
                            <Structure />
                            <AxisBox viewBox="0 0 46 46" aria-hidden="true">
                                <path d="M23 12v12l9-2M23 24l6 2" stroke="#333" fill="none" />
                                <g fontFamily="Liberation Sans, sans-serif" fontSize="13" fill="#111" stroke="#111" strokeWidth=".4">
                                    <text x="18" y="13">Y</text>
                                    <text x="32" y="24">X</text>
                                    <text x="26" y="35">Z</text>
                                </g>
                            </AxisBox>
                        </Client>
                    </Window>

                    <SideColumn>
                        <Window $w={295}>
                            <WindowTitle>
                                <TableIcon />
                                <WindowName>Structure1 - Nodes</WindowName>
                                <WindowButtons />
                            </WindowTitle>
                            <Client $grey $pad={8}>
                                <Grid $w={250}>
                                    <thead>
                                        <tr>
                                            <Head $w={42}>Node</Head>
                                            <Head $w={70}>X<br />mm</Head>
                                            <Head $w={69}>Y<br />mm</Head>
                                            <Head $w={69}>Z<br />mm</Head>
                                        </tr>
                                    </thead>
                                    <tbody>
                                        {nodes.map(([n, ...xyz]) => (
                                            <tr key={n}>
                                                <RowHead scope="row">{n}</RowHead>
                                                {xyz.map((v, i) => <Cell key={i}>{v}</Cell>)}
                                            </tr>
                                        ))}
                                    </tbody>
                                </Grid>
                            </Client>
                        </Window>
                        <Window $w={295} $grow>
                            <WindowTitle>
                                <TableIcon />
                                <WindowName>Structure1 - Beams</WindowName>
                                <WindowButtons />
                            </WindowTitle>
                            <Client $grey>
                                <Grid $w={262}>
                                    <thead>
                                        <tr>
                                            <Head $w={42}>Beam</Head>
                                            <Head $w={70}>Node A</Head>
                                            <Head $w={69}>Node B</Head>
                                            <Head $w={81}>Property Ref</Head>
                                        </tr>
                                    </thead>
                                    <tbody>
                                        {beams.map(([n, a, b]) => (
                                            <tr key={n}>
                                                <RowHead scope="row">{n}</RowHead>
                                                <Cell $center>{a}</Cell>
                                                <Cell $center>{b}</Cell>
                                                <Cell />
                                            </tr>
                                        ))}
                                    </tbody>
                                </Grid>
                                <ScrollBar>
                                    <ScrollButton aria-label="Scroll left"><svg width="6" height="9" viewBox="0 0 6 9"><path d="M5 1L1 4.500 5 8" stroke="#444" strokeWidth="1.500" fill="none" /></svg></ScrollButton>
                                    <ScrollThumb />
                                    <ScrollButton aria-label="Scroll right"><svg width="6" height="9" viewBox="0 0 6 9"><path d="M1 1l4 3.500L1 8" stroke="#444" strokeWidth="1.500" fill="none" /></svg></ScrollButton>
                                </ScrollBar>
                            </Client>
                        </Window>
                    </SideColumn>
                </Desktop>
            </Workspace>

            <StatusBar>
                <StatusCell>ting... 100% done.</StatusCell>
                <StatusCell $w={73}>Modeling Mo</StatusCell>
                <StatusCell $w={152} />
                <StatusCell $w={74} $pad={4}>Input Units:</StatusCell>
            </StatusBar>
        </Page>
    )
}
